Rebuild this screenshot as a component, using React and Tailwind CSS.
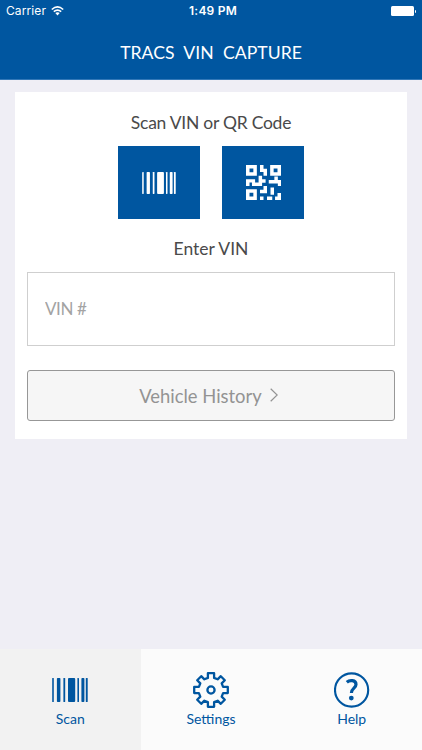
import clsx from "clsx";

function BarcodeIcon({ className }) {
  return (
    <svg viewBox="0 0 36 24" fill="currentColor" preserveAspectRatio="none" className={className}>
      <rect x="0.2" y="0" width="1.6" height="24" rx="0.5" />
      <rect x="4.9" y="0" width="3.5" height="24" rx="0.8" />
      <rect x="11.4" y="0" width="1.8" height="24" rx="0.5" />
      <rect x="16" y="0" width="7.2" height="24" rx="1" />
      <rect x="25.4" y="0" width="1.6" height="24" rx="0.5" />
      <rect x="29.4" y="0" width="3" height="24" rx="0.8" />
      <rect x="33.8" y="0" width="1.9" height="24" rx="0.5" />
    </svg>
  );
}

function QrIcon({ className }) {
  return (
    <svg viewBox="0 0 100 100" fill="currentColor" fillRule="evenodd" className={className}>
      {/* Finder squares */}
      <path d="M0 0H31V31H0ZM10 10V21H21V10Z" />
      <path d="M69 0H100V31H69ZM79 10V21H90V10Z" />
      <path d="M0 69H31V100H0ZM10 79V90H21V79Z" />
      {/* Data modules */}
      <path d="M40 0H50V11H60V31H50V20H40Z" />
      <path d="M0 41H26V50H36V31H46V41H56V51H46V60H17V50H10V60H0Z" />
      <path d="M81 33H91V43H100V60H91V53H65V43H81Z" />
      <path d="M50 60H60V81H40V71H50ZM70 64H80V85H70Z" />
      <path d="M90 80H100V100H83V90H90ZM40 90H50V100H40ZM60 90H75V100H60Z" />
    </svg>
  );
}

function GearIcon({ className }) {
  return (
    <svg viewBox="0 0 36 36" fill="none" stroke="currentColor" strokeWidth="2.3" strokeLinejoin="round" className={className}>
      <path d="M14.9 1.2H21.1V5.9L24.6 7.3L27.8 4.2L31.8 8.2L28.7 11.4L30.1 14.9H34.8V21.1H30.1L28.7 24.6L31.8 27.8L27.8 31.8L24.6 28.7L21.1 30.1V34.8H14.9V30.1L11.4 28.7L8.2 31.8L4.2 27.8L7.3 24.6L5.9 21.1H1.2V14.9H5.9L7.3 11.4L4.2 8.2L8.2 4.2L11.4 7.3L14.9 5.9Z" />
      <circle cx="18" cy="18" r="3.6" />
    </svg>
  );
}

function HelpIcon({ className }) {
  return (
    <svg viewBox="0 0 36 36" fill="none" stroke="currentColor" className={className}>
      <circle cx="17.6" cy="18" r="16.6" strokeWidth="2.1" />
      <path d="M12.8 10.2C15.6 7.8 22 7.8 22 12.5C22 16.2 17.4 16.2 17.4 21" strokeWidth="3.2" />
      <circle cx="17.3" cy="26.1" r="2.4" fill="currentColor" stroke="none" />
    </svg>
  );
}

function StatusBar() {
  return (
    <div className="flex h-[22px] items-center px-1.5 font-['Inter',sans-serif] text-white">
      <div className="flex flex-1 items-center gap-[5px]">
        <span className="text-[12px] tracking-[0.1px]">Carrier</span>
        <svg viewBox="0 0 13 10" className="h-[10px] w-[13px]" fill="none" stroke="currentColor" strokeWidth="1.6">
          <path d="M0.8 3.5Q6.5 -1.7 12.2 3.5M2.8 5.7Q6.5 2.5 10.2 5.7" />
          <path d="M4.3 7.1Q6.5 5.3 8.7 7.1L6.5 9.5Z" fill="currentColor" stroke="none" />
        </svg>
      </div>
      <span className="pl-1 text-[12px] font-semibold tracking-[0.2px]">1:49 PM</span>
      <div className="flex flex-1 items-center justify-end gap-px">
        <div className="h-[10px] w-[23px] rounded-[1.5px] bg-white" />
        <div className="h-[3px] w-px rounded-r bg-white" />
      </div>
    </div>
  );
}

const tabs = [
  { label: "Scan", icon: <BarcodeIcon className="h-6 w-9" />, active: true },
  { label: "Settings", icon: <GearIcon className="size-9" /> },
  { label: "Help", icon: <HelpIcon className="size-9" /> },
];

export default function App() {
  return (
    <div className="flex h-[750px] w-[422px] flex-col overflow-hidden bg-[#efeef5] font-['Lato',sans-serif] text-[#4a4a4a]">
      <header className="h-20 shrink-0 border-b border-[#3278b8] bg-[#0056a0] text-white">
        <StatusBar />
        <h1 className="mt-[18px] text-center text-[17.6px] leading-[26px] [word-spacing:5px]">TRACS VIN CAPTURE</h1>
      </header>

      <main className="flex-1 px-[15px] pt-3">
        <section className="flex h-[347px] flex-col items-center bg-white px-[12px] pt-[19px]">
          <h2 className="text-[17.5px] leading-6 tracking-[-0.25px]">Scan VIN or QR Code</h2>
          <div className="mt-[11px] flex gap-[22px]">
            <button className="flex h-[73px] w-[82px] items-center justify-center bg-[#0056a0] text-white">
              <BarcodeIcon className="h-[22px] w-[34px]" />
            </button>
            <button className="flex h-[73px] w-[82px] items-center justify-center bg-[#0056a0] text-white">
              <QrIcon className="size-[35px]" />
            </button>
          </div>
          <h2 className="mt-[18px] text-[17.5px] leading-6">Enter VIN</h2>
          <input
            placeholder="VIN #"
            className="mt-[11px] h-[74px] w-[368px] shrink-0 border border-[#cfcfcf] px-[17px] pb-0.5 text-[17px] tracking-[-0.4px] placeholder:text-[#a3a3a3]"
          />
          <button className="mt-6 flex h-[51px] w-[368px] shrink-0 items-center justify-center gap-2 rounded-[3px] border border-[#979797] bg-[#f6f6f6] pr-[5px] text-[18.4px] text-[#939393]">
            <span className="pt-0.5">Vehicle History</span>
            <svg viewBox="0 0 8 14" fill="none" stroke="currentColor" strokeWidth="1.2" className="-mt-0.5 h-[14px] w-2">
              <path d="M0.7 0.7L7.2 7L0.7 13.3" />
            </svg>
          </button>
        </section>
      </main>

      <nav className="grid h-[101px] shrink-0 grid-cols-3 bg-[#fbfbfb] text-[#0056a0]">
        {tabs.map((tab) => (
          <button key={tab.label} className={clsx("flex flex-col items-center pt-[23px]", tab.active && "bg-[#f2f2f2]")}>
            <span className="flex h-9 items-center">{tab.icon}</span>
            <span className="mt-0.5 text-[14px] leading-[18px]">{tab.label}</span>
          </button>
        ))}
      </nav>
    </div>
  );
}
